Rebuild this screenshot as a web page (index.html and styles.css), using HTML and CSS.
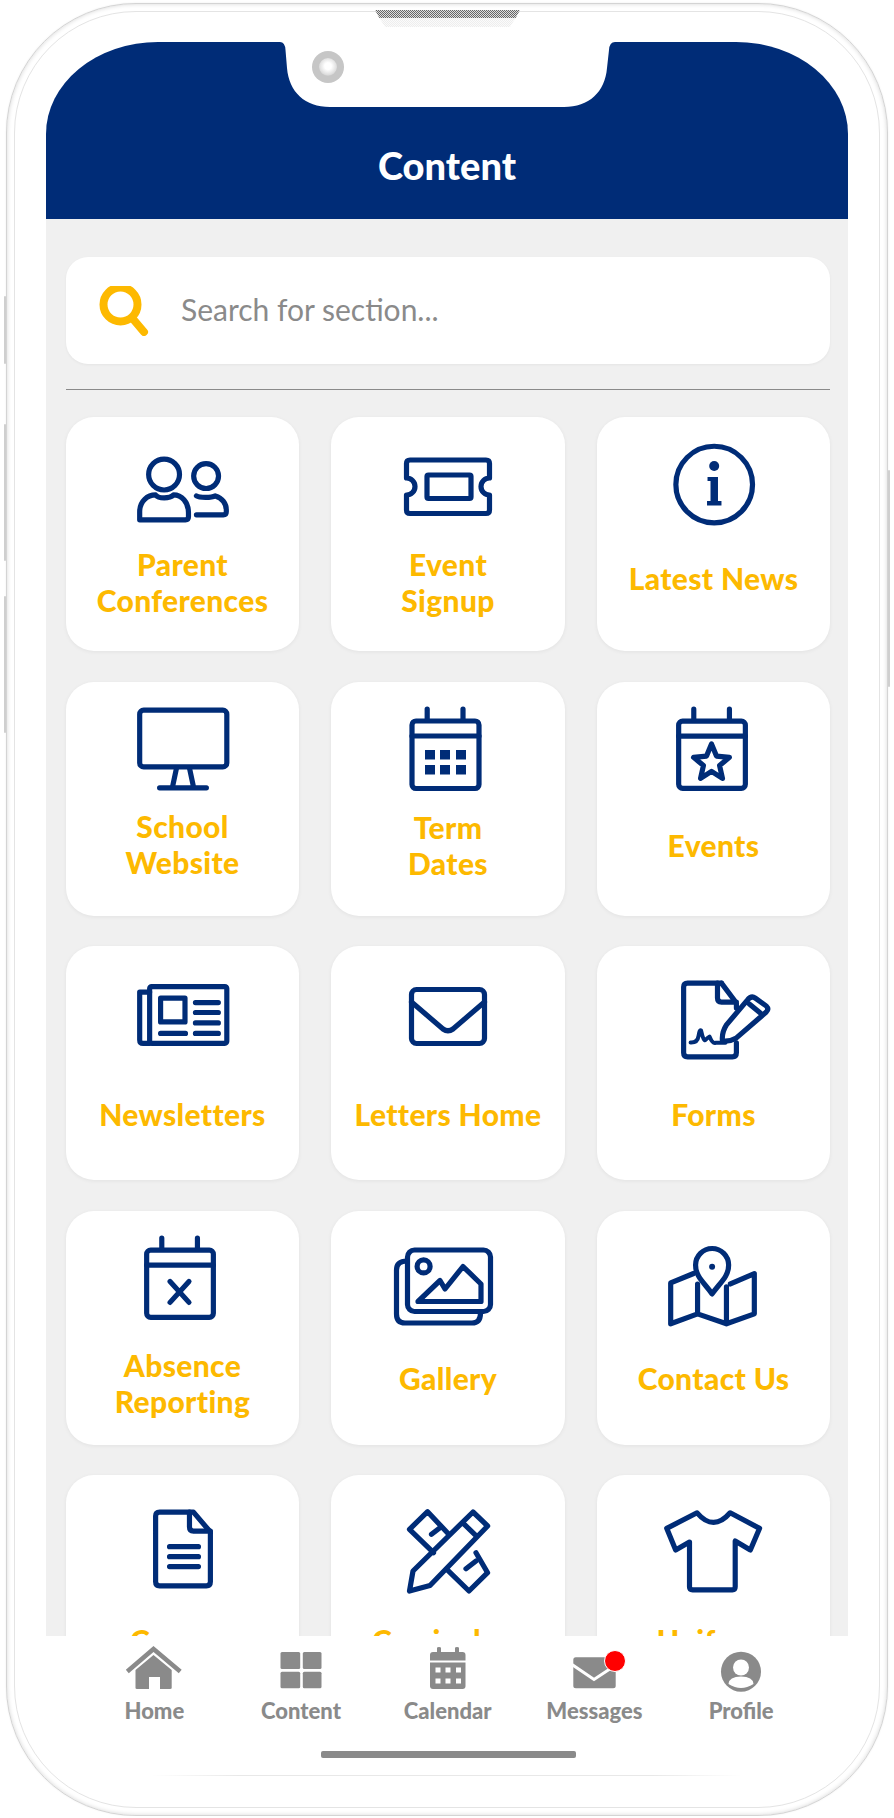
FILE: index.html
```html
<!DOCTYPE html>
<html lang="en">
<head>
  <meta charset="UTF-8" />
  <meta name="viewport" content="width=device-width, initial-scale=1.0"/>
  <title>Content</title>
  <link rel="stylesheet" href="styles.css">
</head>
<body>
  <div class="phone">
    <span class="side-btn btn-a"></span>
    <span class="side-btn btn-b"></span>
    <span class="side-btn btn-c"></span>
    <span class="side-btn btn-d"></span>
    <div class="bezel">
      <span class="speaker"></span>
      <span class="speaker-fade"></span>

      <header class="topbar">
        <svg class="notch" viewBox="280 42 335 66">
          <path d="M280 42 Q285 42 285.5 50 L287 68 C289 92 305 107 330 107 L564 107 C589 107 605 92 607 68 L609 50 Q609.5 42 615 42 Z"/>
        </svg>
        <span class="camera"></span>
        <h1>Content</h1>
      </header>

      <main class="content">
        <div class="search">
          <svg class="search-icon" viewBox="0 0 50 50">
            <circle cx="21.5" cy="18.5" r="17"/>
            <path d="M34 33 L45 46"/>
          </svg>
          <div class="search-text">Search for section...</div>
        </div>
        <div class="divider"></div>

        <div class="grid">
          <a class="card">
            <svg class="icon" viewBox="0 0 234 130">
              <circle cx="98.5" cy="57.5" r="15.5"/>
              <path d="M74 103 V95 C74 84 82 78 90 78 C93 82 104 82 108 78 C116 78 123 85 123 96 V100 Q123 103 120 103 Z"/>
              <circle cx="140.7" cy="59" r="12.5"/>
              <path d="M131 79 C134 81 146 81 150 79 C157 81 161 87 161 93 V95 Q161 98 158 98 H131"/>
            </svg>
            <div class="label">Parent<br>Conferences</div>
          </a>
          <a class="card">
            <svg class="icon" viewBox="0 0 234 130">
              <path d="M79 43 H155 Q158.5 43 158.5 46.5 V61 A8.5 8.5 0 0 0 158.5 78 V93 Q158.5 96.5 155 96.5 H79 Q75.5 96.5 75.5 93 V78 A8.5 8.5 0 0 0 75.5 61 V46.5 Q75.5 43 79 43 Z"/>
              <rect x="96" y="58" width="44" height="23.5" rx="1.5"/>
            </svg>
            <div class="label">Event<br>Signup</div>
          </a>
          <a class="card">
            <svg class="icon" viewBox="-1 0 234 130">
              <circle cx="116.7" cy="67.6" r="38.5"/>
              <circle class="solid" cx="116.7" cy="49" r="5"/>
              <path class="solid" d="M110 60 H120.5 V84 H124 V88.5 H109.5 V84 H113 V64 H110 Z"/>
            </svg>
            <div class="label up">Latest News</div>
          </a>

          <a class="card">
            <svg class="icon" viewBox="2 0 234 130">
              <rect x="76" y="28" width="87.5" height="57" rx="4"/>
              <path d="M113 86 L109 105 M126 86 L130 105 M96 106 H143"/>
            </svg>
            <div class="label rise">School<br>Website</div>
          </a>
          <a class="card">
            <svg class="icon" viewBox="2 0 234 130">
              <rect x="83" y="39" width="67" height="67.5" rx="4"/>
              <path d="M83 54 H150 M98.2 27 V38 M134 27 V38"/>
              <path class="solid" d="M96 68 H106 V77.5 H96 Z M111 68 H121 V77.5 H111 Z M127 68 H137 V77.5 H127 Z M96 83 H106 V92.5 H96 Z M111 83 H121 V92.5 H111 Z M127 83 H137 V92.5 H127 Z"/>
            </svg>
            <div class="label rise-sm">Term<br>Dates</div>
          </a>
          <a class="card">
            <svg class="icon" viewBox="1 0 234 130">
              <rect x="83" y="39" width="67" height="67.5" rx="4"/>
              <path d="M83 54 H150 M98.2 27 V38 M134 27 V38"/>
              <path d="M116 62 L121 74.1 L134 75.4 L124.1 83.6 L127 96.5 L116 89.5 L105 96.5 L107.9 83.6 L98 75.4 L111 74.1 Z"/>
            </svg>
            <div class="label rise-sm">Events</div>
          </a>

          <a class="card">
            <svg class="icon" viewBox="1 0 234 130">
              <rect x="85" y="40.5" width="77.5" height="57" rx="2"/>
              <path d="M85 46 H75 V94 Q75 97.5 78.5 97.5 H85"/>
              <rect x="96" y="52" width="24.5" height="24"/>
              <path d="M131 56.5 H154 M131 66.5 H154 M131 77 H154 M96 87.5 H121 M131 87.5 H154"/>
            </svg>
            <div class="label down">Newsletters</div>
          </a>
          <a class="card">
            <svg class="icon" viewBox="0 0 234 130">
              <rect x="80.5" y="43.5" width="73" height="54" rx="5"/>
              <path d="M80.5 56 L112 83 Q117 86.5 122 83 L153.5 56"/>
            </svg>
            <div class="label down">Letters Home</div>
          </a>
          <a class="card">
            <svg class="icon" viewBox="1 0 234 130">
              <path d="M126 37 H92 Q88 37 88 41 V107 Q88 111 92 111 H137 Q141 111 141 107 V97"/>
              <path d="M126 37 L141 57 V62 M122 37 V52 Q122 56 126 56 H141"/>
              <path d="M127 95 Q126 87 131 79 L152 54 Q156 49 160 52 L171 60 Q174 63 171 66 L141 92 Q134 96 127 95 Z M154 58 L165 67"/>
              <path class="thin" d="M95 96.7 Q102 97 103 90 T105.5 84.5 Q108 96 110 94 T114 90.7 Q117 98 120 97 H130"/>
            </svg>
            <div class="label down">Forms</div>
          </a>

          <a class="card">
            <svg class="icon" viewBox="2 0 234 130">
              <rect x="83" y="39" width="67" height="67.5" rx="4"/>
              <path d="M83 54 H150 M98.2 27 V38 M134 27 V38"/>
              <path d="M106.5 70.5 L125.5 91.5 M125.5 70.5 L106.5 91.5"/>
            </svg>
            <div class="label far">Absence<br>Reporting</div>
          </a>
          <a class="card">
            <svg class="icon" viewBox="0 0 234 130">
              <rect x="76.5" y="39" width="83" height="61.5" rx="7"/>
              <path d="M76 50 Q65.5 50 65.5 59 V103 Q65.5 112 74 112 H141 Q149.5 112 149.5 102"/>
              <circle cx="92.6" cy="55.4" r="6.5"/>
              <path d="M87 90.5 L109 69.5 L114 78 L132 55.5 L150 73 V90.5 Z"/>
            </svg>
            <div class="label down2">Gallery</div>
          </a>
          <a class="card">
            <svg class="icon" viewBox="0 0 234 130">
              <path d="M97 62.5 L74 72 V113 L101 103 L130 113 L158 103 V62.5 L134 73 M101 73 V103 M130 76 V113"/>
              <path d="M115.6 83 C108 72 99 66 99 54 A16.6 16.6 0 0 1 132.2 54 C132.2 66 123 72 115.6 83 Z"/>
              <circle class="solid" cx="115.6" cy="55.6" r="3"/>
            </svg>
            <div class="label down2">Contact Us</div>
          </a>

          <a class="card">
            <svg class="icon" viewBox="-2 0 234 130">
              <path d="M126 37 H92 Q88 37 88 41 V107 Q88 111 92 111 H139 Q143 111 143 107 V57 L126 37 Z"/>
              <path d="M122 37 V52 Q122 56 126 56 H143"/>
              <path d="M102 71.7 H131 M102 81.7 H131 M102 91.7 H131"/>
            </svg>
            <div class="label">Careers</div>
          </a>
          <a class="card">
            <svg class="icon" viewBox="-1 0 234 130">
              <path d="M77.5 116 L81 96 L141 37 L155.6 51 L98 110.5 Z M130.6 47.7 L145 61.7"/>
              <path d="M101.5 77.7 L77.5 54.3 L95.6 36.7 L116.8 59.3 M144 77.7 L155.6 97.7 L137 116 L114.8 94.3"/>
              <path d="M99.5 59.3 L108 52.7 M134 93.7 L144 86"/>
            </svg>
            <div class="label">Curriculum</div>
          </a>
          <a class="card">
            <svg class="icon" viewBox="0 0 234 130">
              <path d="M100.5 37.7 Q117 57 133.7 37.7 L163.3 53.3 L154 75 L138.8 66 V112 Q138.8 115 136 115 H96 Q92.9 115 92.9 112 V67 L79 75 L70 53.3 Z"/>
            </svg>
            <div class="label">Uniform</div>
          </a>
        </div>
      </main>

      <nav class="tabbar">
        <div class="tab">
          <svg viewBox="0 0 60 48">
            <path class="roof" d="M5 25 L29.5 4 L54.5 25"/>
            <path d="M11.5 25 L29.5 10 L47.7 25 V43 Q47.7 44 46 44 H36 V32 H25 V44 H13 Q11.5 44 11.5 43 Z"/>
          </svg>
          <span>Home</span>
        </div>
        <div class="tab">
          <svg viewBox="0 0 60 48">
            <rect x="9.5" y="7" width="19.7" height="17" rx="1.5"/>
            <rect x="31.8" y="7" width="18.7" height="17" rx="1.5"/>
            <rect x="9.5" y="26.7" width="19.7" height="16.6" rx="1.5"/>
            <rect x="31.8" y="26.7" width="18.7" height="16.6" rx="1.5"/>
          </svg>
          <span>Content</span>
        </div>
        <div class="tab">
          <svg viewBox="0 0 60 48">
            <path d="M12 15.5 V10 Q12 7 15 7 H19 V3 Q19 2 21 2 Q23 2 23 3 V7 H37 V3 Q37 2 39 2 Q41 2 41 3 V7 H44.5 Q47.5 7 47.5 10 V15.5 Z"/>
            <path d="M12 17.5 H47.5 V41 Q47.5 44 44.5 44 H15 Q12 44 12 41 Z"/>
            <path class="cut" d="M17.5 22.5 h5 v5 h-5 Z M27.5 22.5 h5 v5 h-5 Z M38 22.5 h5 v5 h-5 Z M17.5 33.5 h5 v5 h-5 Z M27.5 33.5 h5 v5 h-5 Z M38 33.5 h5 v5 h-5 Z"/>
          </svg>
          <span>Calendar</span>
        </div>
        <div class="tab">
          <svg viewBox="0 0 60 48">
            <rect x="9.3" y="12.3" width="42.4" height="31" rx="2.5"/>
            <path class="crease" d="M9.5 20.5 L30 34.5 L51 20.5"/>
          </svg>
          <span class="dot"></span>
          <span>Messages</span>
        </div>
        <div class="tab">
          <svg viewBox="0 0 60 48">
            <circle cx="30" cy="26.7" r="20"/>
            <circle class="cut" cx="30" cy="22.5" r="8"/>
            <path class="cut" d="M17.5 39 Q18 31.5 30 31.5 Q42 31.5 42.5 39 Q36 43 30 43 Q24 43 17.5 39 Z"/>
          </svg>
          <span>Profile</span>
        </div>
      </nav>
      <div class="home-bar"></div>
      <div class="footer-line"></div>
    </div>
  </div>
</body>
</html>
```

FILE: styles.css
```css
* {
  box-sizing: border-box;
}

body {
  margin: 0;
  background: #fff;
  font-family: 'Lato', 'Noto Sans', sans-serif;
  overflow: hidden;
}

.phone {
  position: relative;
  width: 882px;
  height: 1813px;
  margin: 3px 0 0 6px;
  padding: 7px;
  background: #fff;
  border: 1px solid #d4d4d4;
  border-radius: 130px;
  box-shadow: inset 0 0 4px rgba(0,0,0,0.16), 0 0 2px rgba(0,0,0,0.08);
}

.side-btn {
  position: absolute;
  width: 2px;
  background: #cfcfcf;
  border-radius: 2px;
}

.btn-a { left: -3px; top: 292px; height: 68px; }
.btn-b { left: -3px; top: 420px; height: 137px; }
.btn-c { left: -3px; top: 592px; height: 137px; }
.btn-d { right: -3px; top: 466px; height: 217px; }

.bezel {
  position: relative;
  height: 100%;
  padding: 30px 31px 0;
  border: 1px solid #e4e4e4;
  border-radius: 122px;
}

.speaker,
.speaker-fade {
  position: absolute;
  left: 360px;
  width: 145px;
  background: repeating-conic-gradient(#666 0 25%, #ddd 0 50%) 0 0 / 2px 2px;
}

.speaker {
  top: -2px;
  height: 8px;
  clip-path: polygon(0 0, 100% 0, 97% 100%, 3% 100%);
}

.speaker-fade {
  top: 6px;
  height: 9px;
  opacity: 0.12;
  clip-path: polygon(3% 0, 97% 0, 93% 100%, 7% 100%);
}

.topbar {
  position: relative;
  height: 177px;
  background: #002c77;
  border-radius: 112px 112px 0 0 / 92px 92px 0 0;
}

.topbar h1 {
  margin: 0;
  padding-top: 98px;
  color: #fff;
  font-size: 38px;
  font-weight: 900;
  line-height: 50px;
  text-align: center;
}

.notch {
  position: absolute;
  left: 234px;
  top: 0;
  width: 335px;
  height: 66px;
  fill: #fff;
}

.camera {
  position: absolute;
  left: 266px;
  top: 9px;
  width: 32px;
  height: 32px;
  background: #c6c6c6;
  border-radius: 50%;
}

.camera::after {
  content: '';
  position: absolute;
  left: 7px;
  top: 7px;
  width: 18px;
  height: 18px;
  background: radial-gradient(circle at 50% 45%, #fff 25%, #ddd 65%, #999 100%);
  border-radius: 50%;
}

.content {
  height: 1417px;
  padding: 38px 0 0 20px;
  background: #f0f0f0;
  overflow: hidden;
}

.search {
  display: flex;
  align-items: center;
  width: 764px;
  height: 107px;
  padding-left: 33px;
  background: #fff;
  border-radius: 22px;
  box-shadow: 0 1px 3px rgba(0,0,0,0.05);
}

.search-icon {
  width: 50px;
  height: 50px;
  fill: none;
  stroke: #fdb900;
  stroke-width: 8;
  stroke-linecap: round;
}

.search-text {
  margin: -4px 0 0 32px;
  color: #8a8a8a;
  font-size: 30px;
}

.divider {
  width: 764px;
  height: 1px;
  margin: 25px 0 27px;
  background: #8a8a8a;
}

.grid {
  display: grid;
  grid-template-columns: 233px 234px 233px;
  grid-auto-rows: 234px;
  column-gap: 32px;
  row-gap: 30.5px;
}

.card {
  display: block;
  background: #fff;
  border-radius: 28px;
  box-shadow: 0 1px 4px rgba(0,0,0,0.06);
}

.icon {
  display: block;
  width: 100%;
  height: 130px;
  fill: none;
  stroke: #002c77;
  stroke-width: 5.2;
  stroke-linecap: round;
  stroke-linejoin: round;
}

.icon .solid {
  fill: #002c77;
  stroke: none;
}

.icon .thin {
  stroke-width: 4;
}

.label {
  display: flex;
  align-items: center;
  justify-content: center;
  height: 69px;
  color: #fdb900;
  font-size: 30px;
  font-weight: 900;
  letter-spacing: 0.35px;
  line-height: 36px;
  text-align: center;
}

.label.up { margin-top: -4px; }
.label.rise { margin-top: -2px; }
.label.rise-sm { margin-top: -1px; }
.label.down { margin-top: 3px; }
.label.down2 { margin-top: 3px; }
.label.far { margin-top: 8px; }

.tabbar {
  display: grid;
  grid-template-columns: repeat(5, 146.7px);
  padding: 9px 0 0 35px;
  background: #fff;
}

.tab {
  position: relative;
  display: flex;
  flex-direction: column;
  align-items: center;
  color: #8a8a8a;
  font-size: 22px;
  font-weight: 900;
  line-height: 28px;
}

.tab svg {
  display: block;
  width: 60px;
  height: 48px;
  margin-bottom: 4px;
  fill: #8a8a8a;
}

.tab .cut {
  fill: #fff;
}

.tab .roof,
.tab .crease {
  fill: none;
  stroke-width: 4.5;
  stroke-linecap: square;
}

.tab .roof {
  stroke: #8a8a8a;
}

.tab .crease {
  stroke: #fff;
  stroke-width: 3;
}

.dot {
  position: absolute;
  left: 83px;
  top: 5px;
  width: 22px;
  height: 22px;
  background: #f00;
  border: 1.5px solid #fff;
  border-radius: 50%;
}

.home-bar {
  width: 255px;
  height: 7px;
  margin: 26px 0 0 275px;
  background: #8a8a8a;
  border-radius: 2px;
}

.footer-line {
  width: 590px;
  height: 1px;
  margin: 17px 0 0 105px;
  background: linear-gradient(90deg, #fff, #e8e8e8 15%, #e8e8e8 85%, #fff);
}
```
